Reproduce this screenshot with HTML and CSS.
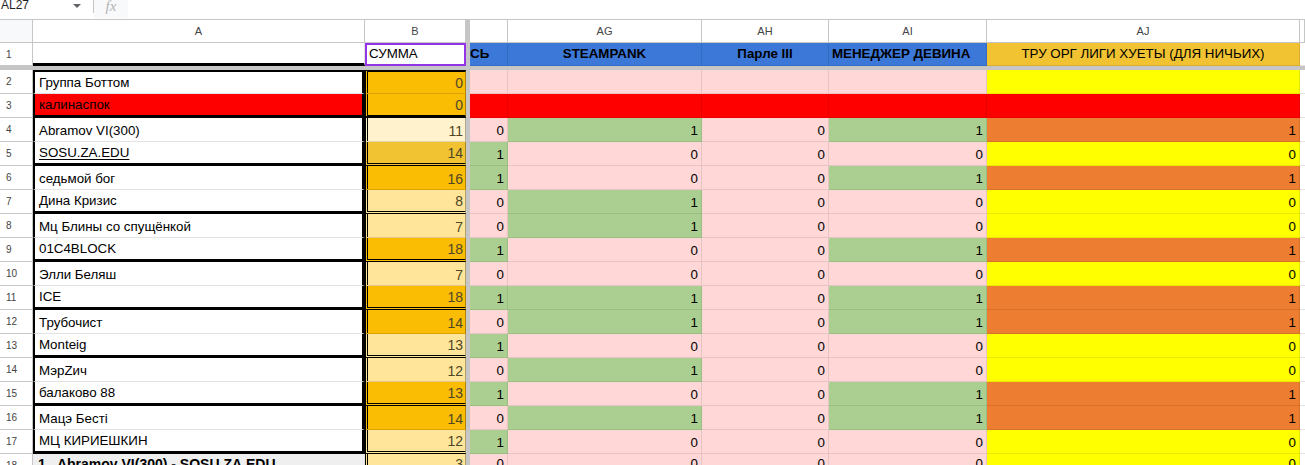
FILE: index.html
```html
<!DOCTYPE html>
<html lang="ru">
<head>
    <meta charset="UTF-8">
    <title>Таблица</title>
    <link rel="stylesheet" href="styles.css">
</head>
<body>

    <!-- Formula bar -->
    <div class="toolbar">
        <div class="namebox"><span class="ref">AL27</span><span class="caret"></span></div>
        <div class="sep"></div>
        <div class="fx">fx</div>
    </div>

    <div class="sheet">
        <!-- Column letters -->
        <div class="row colhdr">
            <div class="c corner"></div>
            <div class="c">A</div>
            <div class="c">B</div>
            <div class="dv"></div>
            <div class="c"></div>
            <div class="c">AG</div>
            <div class="c">AH</div>
            <div class="c">AI</div>
            <div class="c">AJ</div>
            <div class="c"></div>
        </div>

        <!-- Row 1: titles -->
        <div class="row r1">
            <div class="rn">1</div>
            <div class="c title-a"></div>
            <div class="c sel">СУММА</div>
            <div class="dv"></div>
            <div class="c hb cut">СЬ</div>
            <div class="c hb mid">STEAMPANK</div>
            <div class="c hb mid">Парле III</div>
            <div class="c hb">МЕНЕДЖЕР ДЕВИНА</div>
            <div class="c hj mid">ТРУ ОРГ ЛИГИ ХУЕТЫ (ДЛЯ НИЧЬИХ)</div>
            <div class="c ex"></div>
        </div>

        <div class="freeze"></div>

        <div class="row">
            <div class="rn">2</div>
            <div class="c nm first">Группа Боттом</div>
            <div class="c sm o1 num first">0</div>
            <div class="dv"></div>
            <div class="c pk"></div><div class="c pk"></div><div class="c pk"></div><div class="c pk"></div><div class="c ye"></div>
            <div class="c ex"></div>
        </div>
        <div class="row">
            <div class="rn">3</div>
            <div class="c nm rd bot">калинаспок</div>
            <div class="c sm o1 num bot-solid">0</div>
            <div class="dv"></div>
            <div class="c rd"></div><div class="c rd"></div><div class="c rd"></div><div class="c rd"></div><div class="c rd"></div>
            <div class="c ex"></div>
        </div>

        <div class="row">
            <div class="rn">4</div>
            <div class="c nm">Abramov VI(300)</div>
            <div class="c sm o3 num">11</div>
            <div class="dv"></div>
            <div class="c num pk">0</div><div class="c num gr">1</div><div class="c num pk">0</div><div class="c num gr">1</div><div class="c num or">1</div>
            <div class="c ex"></div>
        </div>
        <div class="row">
            <div class="rn">5</div>
            <div class="c nm bot"><u>SOSU.ZA.EDU</u></div>
            <div class="c sm o4 num bot">14</div>
            <div class="dv"></div>
            <div class="c num gr">1</div><div class="c num pk">0</div><div class="c num pk">0</div><div class="c num pk">0</div><div class="c num ye">0</div>
            <div class="c ex"></div>
        </div>

        <div class="row">
            <div class="rn">6</div>
            <div class="c nm">седьмой бог</div>
            <div class="c sm o1 num">16</div>
            <div class="dv"></div>
            <div class="c num gr">1</div><div class="c num pk">0</div><div class="c num pk">0</div><div class="c num gr">1</div><div class="c num or">1</div>
            <div class="c ex"></div>
        </div>
        <div class="row">
            <div class="rn">7</div>
            <div class="c nm bot">Дина Кризис</div>
            <div class="c sm o2 num bot">8</div>
            <div class="dv"></div>
            <div class="c num pk">0</div><div class="c num gr">1</div><div class="c num pk">0</div><div class="c num pk">0</div><div class="c num ye">0</div>
            <div class="c ex"></div>
        </div>

        <div class="row">
            <div class="rn">8</div>
            <div class="c nm">Мц Блины со спущёнкой</div>
            <div class="c sm o2 num">7</div>
            <div class="dv"></div>
            <div class="c num pk">0</div><div class="c num gr">1</div><div class="c num pk">0</div><div class="c num pk">0</div><div class="c num ye">0</div>
            <div class="c ex"></div>
        </div>
        <div class="row">
            <div class="rn">9</div>
            <div class="c nm bot">01C4BLOCK</div>
            <div class="c sm o1 num bot">18</div>
            <div class="dv"></div>
            <div class="c num gr">1</div><div class="c num pk">0</div><div class="c num pk">0</div><div class="c num gr">1</div><div class="c num or">1</div>
            <div class="c ex"></div>
        </div>

        <div class="row">
            <div class="rn">10</div>
            <div class="c nm">Элли Беляш</div>
            <div class="c sm o2 num">7</div>
            <div class="dv"></div>
            <div class="c num pk">0</div><div class="c num pk">0</div><div class="c num pk">0</div><div class="c num pk">0</div><div class="c num ye">0</div>
            <div class="c ex"></div>
        </div>
        <div class="row">
            <div class="rn">11</div>
            <div class="c nm bot">ICE</div>
            <div class="c sm o1 num bot">18</div>
            <div class="dv"></div>
            <div class="c num gr">1</div><div class="c num gr">1</div><div class="c num pk">0</div><div class="c num gr">1</div><div class="c num or">1</div>
            <div class="c ex"></div>
        </div>

        <div class="row">
            <div class="rn">12</div>
            <div class="c nm">Трубочист</div>
            <div class="c sm o1 num">14</div>
            <div class="dv"></div>
            <div class="c num pk">0</div><div class="c num gr">1</div><div class="c num pk">0</div><div class="c num gr">1</div><div class="c num or">1</div>
            <div class="c ex"></div>
        </div>
        <div class="row">
            <div class="rn">13</div>
            <div class="c nm bot">Monteig</div>
            <div class="c sm o2 num bot">13</div>
            <div class="dv"></div>
            <div class="c num gr">1</div><div class="c num pk">0</div><div class="c num pk">0</div><div class="c num pk">0</div><div class="c num ye">0</div>
            <div class="c ex"></div>
        </div>

        <div class="row">
            <div class="rn">14</div>
            <div class="c nm">МэрZич</div>
            <div class="c sm o2 num">12</div>
            <div class="dv"></div>
            <div class="c num pk">0</div><div class="c num gr">1</div><div class="c num pk">0</div><div class="c num pk">0</div><div class="c num ye">0</div>
            <div class="c ex"></div>
        </div>
        <div class="row">
            <div class="rn">15</div>
            <div class="c nm bot">балаково 88</div>
            <div class="c sm o1 num bot">13</div>
            <div class="dv"></div>
            <div class="c num gr">1</div><div class="c num pk">0</div><div class="c num pk">0</div><div class="c num gr">1</div><div class="c num or">1</div>
            <div class="c ex"></div>
        </div>

        <div class="row">
            <div class="rn">16</div>
            <div class="c nm">Мацэ Бесті</div>
            <div class="c sm o1 num">14</div>
            <div class="dv"></div>
            <div class="c num pk">0</div><div class="c num gr">1</div><div class="c num pk">0</div><div class="c num gr">1</div><div class="c num or">1</div>
            <div class="c ex"></div>
        </div>
        <div class="row">
            <div class="rn">17</div>
            <div class="c nm bot">МЦ КИРИЕШКИН</div>
            <div class="c sm o2 num bot">12</div>
            <div class="dv"></div>
            <div class="c num gr">1</div><div class="c num pk">0</div><div class="c num pk">0</div><div class="c num pk">0</div><div class="c num ye">0</div>
            <div class="c ex"></div>
        </div>

        <!-- Totals (cut off by the window) -->
        <div class="row total">
            <div class="rn">18</div>
            <div class="c tot-name">1 . Abramov VI(300) - SOSU.ZA.EDU</div>
            <div class="c sm o2 num">3</div>
            <div class="dv"></div>
            <div class="c num pk">0</div><div class="c num pk">0</div><div class="c num pk">0</div><div class="c num pk">0</div><div class="c num ye">0</div>
            <div class="c ex"></div>
        </div>
    </div>

</body>
</html>
```

FILE: styles.css
```css
body {
    margin: 0;
    width: 1305px;
    height: 465px;
    overflow: hidden;
    background: #fff;
    color: #000;
    font-family: "Liberation Sans", Arial, sans-serif;
    font-size: 13.33px;
}

/* Formula bar */
.toolbar {
    display: flex;
    height: 19px;
    border-bottom: 1px solid #c4c7c5;
}

    .toolbar .namebox {
        width: 93px;
        display: flex;
        align-items: flex-start;
    }

    .toolbar .ref {
        font-size: 12px;
        line-height: 11px;
        color: #1f1f1f;
        padding-left: 1px;
    }

    .toolbar .caret {
        margin: 4px 12px 0 auto;
        border-left: 4px solid transparent;
        border-right: 4px solid transparent;
        border-top: 4px solid #5f6368;
    }

    .toolbar .sep {
        width: 1px;
        height: 13px;
        background: #c4c7c5;
    }

    .toolbar .fx {
        width: 34px;
        height: 18px;
        background: #f8f9fa;
        color: #b4b4b4;
        font-family: "Liberation Serif", serif;
        font-style: italic;
        font-size: 15px;
        line-height: 12px;
        text-align: center;
    }

/* Grid */
.row {
    display: grid;
    grid-template-columns: 33px 332px 101px 4px 38px 194px 127px 158px 313px 5px;
    height: 24px;
}

    .row > div {
        box-sizing: border-box;
        overflow: hidden;
        white-space: nowrap;
    }

.c {
    display: flex;
    align-items: flex-end;
    padding: 0 3px 2px;
    line-height: 16px;
    border-right: 1px solid #e2e2e2;
    border-bottom: 1px solid #e2e2e2;
}

.num {
    justify-content: flex-end;
}

.rn {
    display: flex;
    align-items: center;
    padding-left: 6px;
    font-size: 10px;
    color: #444;
    border-right: 1px solid #c4c7c5;
    border-bottom: 1px solid #c4c7c5;
}

.dv, .freeze {
    background: #c6c6c6;
}

.freeze {
    height: 4px;
}

/* Column letters */
.colhdr {
    height: 23px;
}

    .colhdr .c {
        justify-content: center;
        align-items: center;
        padding: 0;
        font-size: 11px;
        color: #444;
        border-color: #c4c7c5;
    }

    .colhdr .corner {
        background: #f8f9fa;
    }

/* Row 1 */
.r1 {
    height: 23px;
}

    .r1 .c {
        padding-bottom: 3px;
    }

    .r1 .title-a {
        border-bottom: 3px solid #000;
    }

    .r1 .sel {
        border: 2px solid #9334e6;
        padding: 0 2px 2px;
        background: #fff;
    }

    .r1 .hb {
        background: #3c78d8;
        font-weight: bold;
        border-color: rgba(0, 0, 0, 0.1);
    }

    .r1 .cut {
        padding-left: 0;
    }

    .r1 .hj {
        background: #f1c232;
        border-color: rgba(0, 0, 0, 0.1);
    }

    .r1 .mid {
        justify-content: center;
    }

/* Name column groups */
.nm {
    padding-left: 4px;
    border-left: 2px solid #000;
    border-right: 3px solid #000;
}

    .nm.first {
        border-top: 2px solid #000;
    }

    .nm.bot {
        border-bottom: 3px solid #000;
    }

    .nm u {
        text-decoration-thickness: 1px;
        text-underline-offset: 2px;
    }

/* Sum column */
.sm {
    font-size: 14px;
    color: #4f4628;
    padding-right: 2px;
    border-left: 3px double #000;
    border-right: 1px solid rgba(0, 0, 0, 0.3);
    border-bottom-color: rgba(0, 0, 0, 0.12);
}

    .sm.first {
        border-top: 2px solid #000;
    }

    .sm.bot {
        border-bottom: 3px double #000;
    }

    .sm.bot-solid {
        border-bottom: 3px solid #000;
    }

.o1 { background: #fbbc04; }
.o2 { background: #ffe599; }
.o3 { background: #fff2cc; }
.o4 { background: #f1c232; }

/* Score cells */
.pk, .gr, .or, .ye, .rd {
    border-color: rgba(0, 0, 0, 0.09);
}

.pk { background: #ffd7d7; }
.gr { background: #abcf91; }
.or { background: #ed7d31; }
.ye { background: #ffff00; }
.rd { background: #ff0000; }

.nm.rd {
    border-color: #000;
}

.ex {
    background: #fff;
}

/* Totals row */
.total .c {
    align-items: flex-start;
    padding-top: 2px;
}

.total .tot-name {
    background: #efefef;
    padding-left: 5px;
    font-weight: bold;
    font-size: 14px;
}
```
